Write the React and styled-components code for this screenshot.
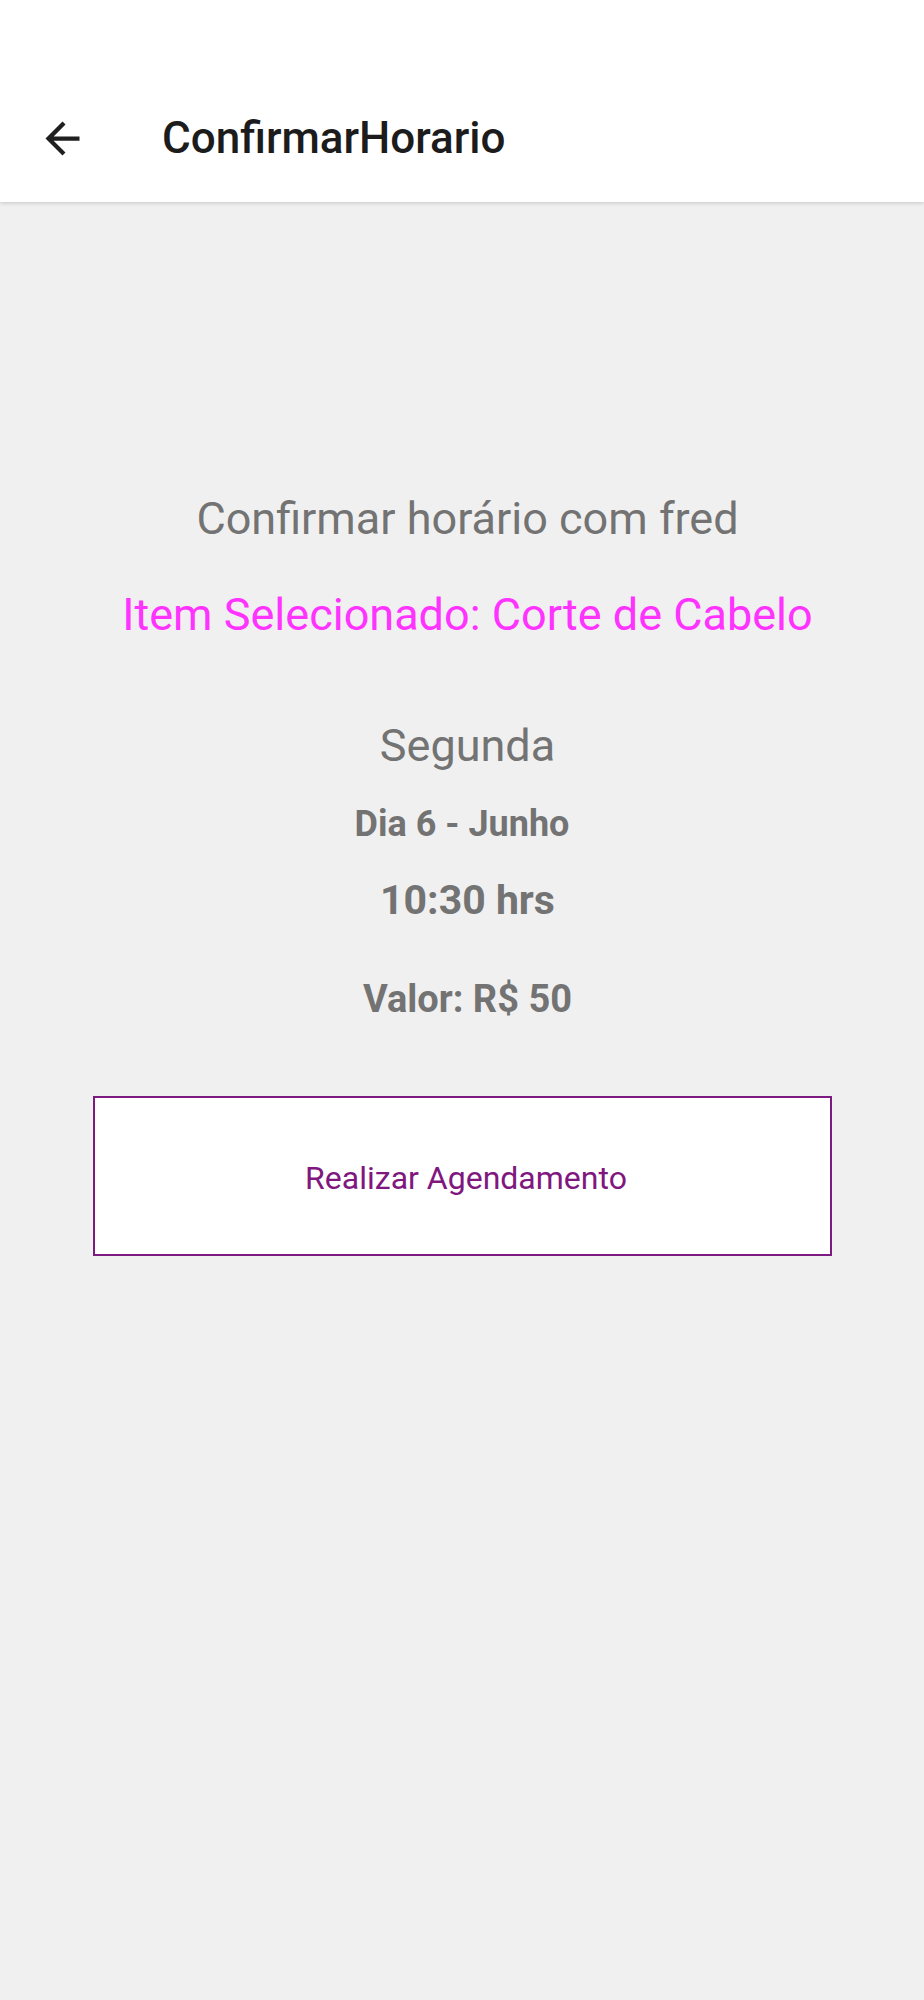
import styled, { createGlobalStyle } from "styled-components";

const GlobalStyle = createGlobalStyle`
  html, body {
    margin: 0;
    padding: 0;
    background: #f0f0f0;
    font-family: Roboto, "Noto Sans", sans-serif;
  }
`;

const Page = styled.div`
  min-height: 2000px;
  background: #f0f0f0;
`;

const Header = styled.header`
  height: 202px;
  box-sizing: border-box;
  padding-top: 74px;
  background: #ffffff;
  box-shadow: 0 1px 4px rgba(0, 0, 0, 0.18);
  position: relative;
  z-index: 1;
`;

const Toolbar = styled.div`
  height: 128px;
  display: flex;
  align-items: center;
  padding-left: 37px;
`;

const BackButton = styled.button`
  border: none;
  background: none;
  padding: 0;
  margin: 0;
  display: flex;
  width: 51px;
  height: 51px;
  color: #1f1f1f;
  cursor: pointer;
`;

const Title = styled.h1`
  margin: 0 0 0 74px;
  font-size: 44px;
  font-weight: 500;
  line-height: 52px;
  color: #1c1c1c;
`;

const Content = styled.main`
  display: flex;
  flex-direction: column;
  align-items: center;
  padding-top: 290px;
`;

const Line = styled.p`
  margin: ${(p) => p.$gap}px 0 0;
  padding-left: ${(p) => (p.$shift ?? 11)}px;
  font-size: ${(p) => p.$size}px;
  line-height: ${(p) => Math.round(p.$size * 1.172)}px;
  font-weight: ${(p) => (p.$bold ? 700 : 400)};
  color: ${(p) => p.$color || "#737373"};
  text-align: center;
  white-space: nowrap;
`;

const ConfirmButton = styled.button`
  margin-top: 74px;
  width: 739px;
  height: 160px;
  box-sizing: border-box;
  padding: 4px 0 0 8px;
  background: #ffffff;
  border: 2px solid #7d1a80;
  font-family: Roboto, "Noto Sans", sans-serif;
  font-size: 32px;
  font-weight: 400;
  color: #80177f;
  cursor: pointer;
`;

function App() {
  return (
    <Page>
      <GlobalStyle />
      <Header>
        <Toolbar>
          <BackButton aria-label="Voltar">
            <svg width="51" height="51" viewBox="0 0 24 24" fill="currentColor">
              <path d="M20 11H7.83l5.59-5.59L12 4l-8 8 8 8 1.41-1.41L7.83 13H20v-2z" />
            </svg>
          </BackButton>
          <Title>ConfirmarHorario</Title>
        </Toolbar>
      </Header>
      <Content>
        <Line $size={45} $gap={0}>
          Confirmar horário com fred
        </Line>
        <Line $size={45} $gap={43} $color="#ff33ff">
          Item Selecionado: Corte de Cabelo
        </Line>
        <Line $size={45} $gap={78}>
          Segunda
        </Line>
        <Line $size={36} $gap={31} $shift={0} $bold>
          Dia 6 - Junho
        </Line>
        <Line $size={41} $gap={31} $bold>
          10:30 hrs
        </Line>
        <Line $size={38} $gap={53} $bold>
          Valor: R$ 50
        </Line>
        <ConfirmButton>Realizar Agendamento</ConfirmButton>
      </Content>
    </Page>
  );
}

export default App;
